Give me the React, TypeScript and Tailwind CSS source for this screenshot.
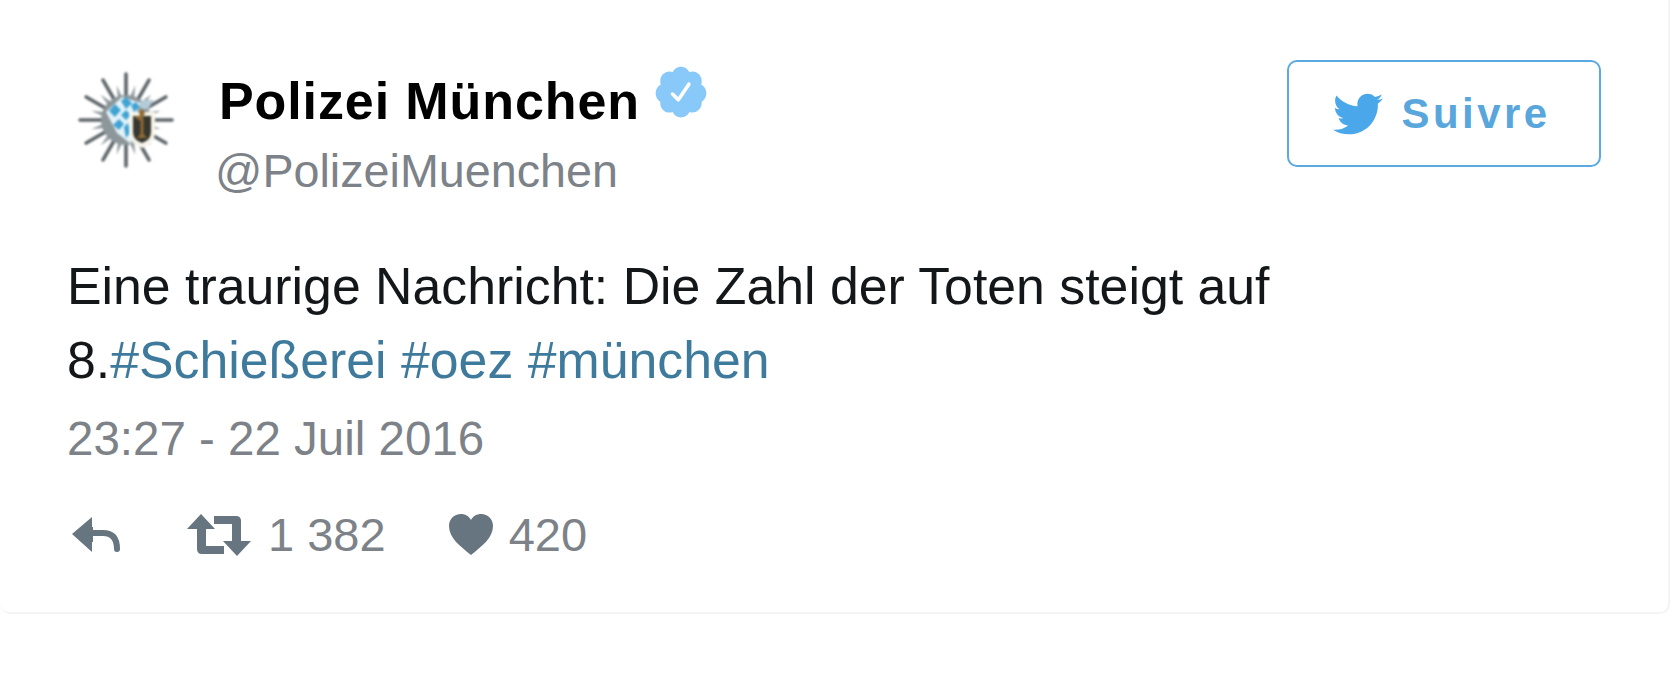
import { FaTwitter } from "react-icons/fa";

function Logo() {
  const main = [-90, -60, -30, 0, 30, 60, 90, 120, 150, 180, 210, 240];
  const minor = [-75, -45, -15, 15, 45, 75, 105, 135, 165, 195, 225, 255];
  const spike = (a: number, l: number, w: number) => {
    const r = (a * Math.PI) / 180;
    const c = Math.cos(r);
    const s = Math.sin(r);
    return `${-s * w},${c * w} ${s * w},${-c * w} ${c * l},${s * l}`;
  };
  const tip = (a: number, l: number) => {
    const r = (a * Math.PI) / 180;
    return { x2: Math.cos(r) * l, y2: Math.sin(r) * l };
  };
  return (
    <svg width="100" height="100" viewBox="-50 -50 100 100" className="shrink-0 blur-[0.8px]">
      {minor.map((a) => (
        <polygon key={a} points={spike(a, 36, 6)} fill="#8f989c" />
      ))}
      {main.map((a) => (
        <line key={a} x1={0} y1={0} {...tip(a, 46)} stroke="#5d6569" strokeWidth="3.6" strokeLinecap="round" />
      ))}
      <circle r="25" fill="#8d969a" />
      <path d="M-20 -8 L-4 -23 L15 -17 L7 0 L5 24 L-9 13 Z" fill="#e3f3f9" />
      <path d="M-17 -9 L-11 -16 L-5 -10 L-11 -3 Z M-5 -19 L0 -23 L6 -17 L0 -11 Z M-5 -5 L0 -10 L5 -5 L0 0 Z M5 -15 L10 -18 L14 -13 L8 -8 Z M-13 5 L-7 -1 L-2 4 L-7 10 Z M-2 7 L2 3 L4 13 L0 18 Z" fill="#3fa3d3" />
      <path d="M15 -20 H28 L22 -11 H14 Z" fill="#b4ccd8" />
      <path d="M3 -8 H29 V14 Q28 24 16 28 Q4 24 3 14 Z" fill="#f7f4ea" />
      <path d="M7 -4 H25 V12 Q25 20 16 23 Q7 20 7 12 Z" fill="#37372f" />
      <path d="M16 -12 L19 -7 L17.5 -4 V14 L21 18 H11 L14.5 14 V1 L8 -3 L14 -4 L13 -7 Z" fill="#8f6a35" />
    </svg>
  );
}

function ReplyIcon() {
  return (
    <svg width="50" height="38" viewBox="0 0 50 38" className="shrink-0">
      <path d="M21 1 L1 18 L21 36 V26 H22 V11 H21 Z" fill="#66757f" />
      <path d="M20 17 H32 C41 17 46 22 46 33" fill="none" stroke="#66757f" strokeWidth="6" strokeLinecap="round" />
    </svg>
  );
}

function RetweetIcon() {
  return (
    <svg width="64" height="42" viewBox="0 0 64 42" className="shrink-0">
      <path d="M14 0 L28 15 H19 V32 H37 V40 H15 Q10 40 10 35 V15 H0 Z" fill="#66757f" />
      <path d="M50 42 L36 27 H45 V10 H27 V2 H49 Q54 2 54 7 V27 H64 Z" fill="#66757f" />
    </svg>
  );
}

function HeartIcon() {
  return (
    <svg width="44" height="42" viewBox="0 0 44 42" className="shrink-0">
      <path d="M22 41 C11 32 0 24 0 12 C0 5 5 0 12 0 C16 0 20 2 22 6 C24 2 28 0 32 0 C39 0 44 5 44 12 C44 24 33 32 22 41 Z" fill="#66757f" />
    </svg>
  );
}

export default function App() {
  return (
    <div className="h-[700px] w-[1675px] overflow-hidden bg-white font-['Liberation_Sans',Arial,sans-serif]">
      <div className="flex h-[614px] w-[1670px] flex-col rounded-b-[10px] border-r-2 border-b-2 border-[#f2f4f5] pl-[67px] pr-[67px] pt-[60px]">
        <div className="flex items-start">
          <div className="ml-[9px] mt-[10px] shrink-0">
            <Logo />
          </div>
          <div className="ml-[41px] flex min-w-0 flex-1 flex-col">
            <div className="ml-[2px] flex h-[85px] items-start pt-[15px]">
              <span className="text-[52px] font-bold leading-[52px] tracking-[0.9px] text-[#000000]">Polizei München</span>
              <svg width="58" height="58" viewBox="0 0 24 24" className="-mt-[12px] ml-[12px] shrink-0" fill="#88c9f9">
                <path d="M22.5 12.5c0-1.58-.875-2.95-2.148-3.6.154-.435.238-.905.238-1.4 0-2.21-1.71-3.998-3.818-3.998-.47 0-.92.084-1.336.25C14.818 2.415 13.51 1.5 12 1.5s-2.816.917-3.437 2.25c-.415-.165-.866-.25-1.336-.25-2.11 0-3.818 1.79-3.818 4 0 .494.083.964.237 1.4-1.272.65-2.147 2.018-2.147 3.6 0 1.495.782 2.798 1.942 3.486-.02.17-.032.34-.032.514 0 2.21 1.708 4 3.818 4 .47 0 .92-.086 1.335-.25.62 1.334 1.926 2.25 3.437 2.25 1.512 0 2.818-.916 3.437-2.25.415.163.865.248 1.336.248 2.11 0 3.818-1.79 3.818-4 0-.174-.012-.344-.033-.513 1.158-.687 1.943-1.99 1.943-3.484zm-6.616-3.334l-4.334 6.5c-.145.217-.382.334-.625.334-.143 0-.288-.04-.416-.126l-.115-.094-2.415-2.415c-.293-.293-.293-.768 0-1.06s.768-.294 1.06 0l1.77 1.767 3.825-5.74c.23-.345.696-.436 1.04-.207.346.23.44.696.21 1.04z" />
              </svg>
            </div>
            <div className="-ml-[2px] text-[46.7px] leading-[52px] text-[#7c8288]">@PolizeiMuenchen</div>
          </div>
          <div className="flex h-[107px] w-[314px] shrink-0 items-center justify-center gap-[19px] rounded-[10px] border-2 border-[#5aa9e0] pr-[5px]">
            <FaTwitter className="h-[50px] w-[50px] text-[#4aa8ea]" />
            <span className="text-[42px] font-bold tracking-[3.4px] text-[#58a6dc]">Suivre</span>
          </div>
        </div>
        <div className="mt-[52px] text-[51.8px] leading-[74px] text-[#14171a]">
          <div>Eine traurige Nachricht: Die Zahl der Toten steigt auf</div>
          <div>
            8.<span className="text-[#3e7a9c]">#Schießerei #oez #münchen</span>
          </div>
        </div>
        <div className="mt-[16px] text-[47.5px] leading-[52px] text-[#7c8288]">23:27 - 22 Juil 2016</div>
        <div className="mt-[45px] flex items-center text-[47px] leading-[50px] text-[#7c8288]">
          <div className="ml-[4px] shrink-0">
            <ReplyIcon />
          </div>
          <div className="ml-[66px] flex items-center gap-[17px]">
            <RetweetIcon />
            <span>1 382</span>
          </div>
          <div className="ml-[63px] flex items-center gap-[16px]">
            <HeartIcon />
            <span>420</span>
          </div>
        </div>
      </div>
    </div>
  );
}
